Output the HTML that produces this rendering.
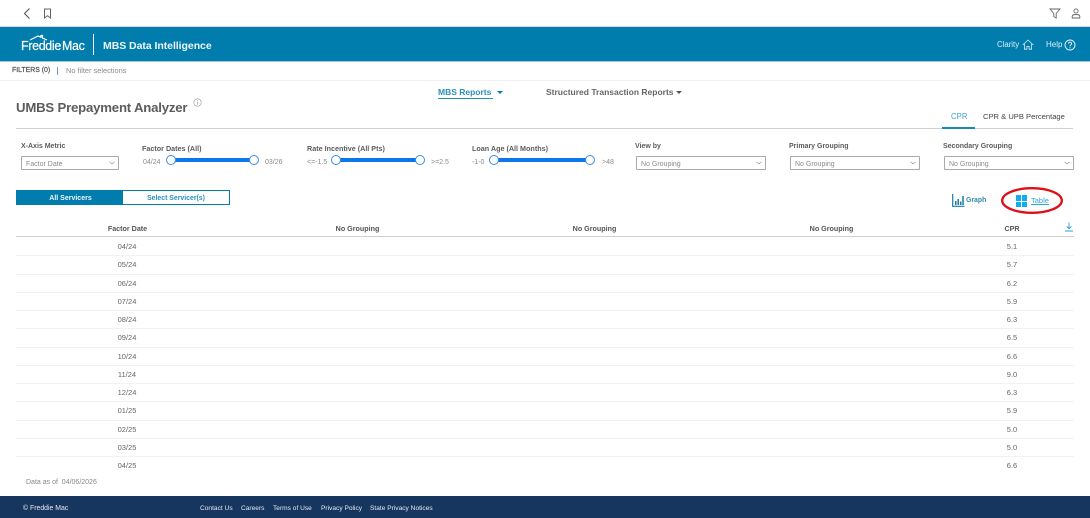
<!DOCTYPE html>
<html><head><meta charset="utf-8">
<style>
html,body{margin:0;padding:0;background:#fff;}
body{width:1090px;height:518px;overflow:hidden;position:relative;font-family:"Liberation Sans",sans-serif;color:#555;filter:blur(.3px);}
.t{position:absolute;white-space:nowrap;line-height:12px;}
.b{position:absolute;}
.lab{font-size:7px;font-weight:bold;color:#5c5c5c;}
.lab2{font-size:7.2px;font-weight:bold;color:#5c5c5c;}
.sm{font-size:7px;color:#8a8a8a;}
.sel{position:absolute;height:12px;border:1px solid #a9a9a9;border-radius:1px;top:156px;background:#fff;font-size:7px;color:#8a8a8a;}
.sel span{position:absolute;left:4px;top:2px;line-height:12px;}
.sel svg{position:absolute;right:3px;top:4px;}
.track{position:absolute;height:4px;top:158px;background:#0d76e8;}
.knob{position:absolute;width:8px;height:8px;top:154.500px;border:1px solid #3b8dea;border-radius:50%;background:#fff;}
.row{position:absolute;left:16px;width:1058px;height:1px;background:#f2f2f2;}
.cell{position:absolute;font-size:7.500px;line-height:10px;color:#666;transform:translateX(-50%);white-space:nowrap;}
.th{position:absolute;top:224px;font-size:7.150px;font-weight:bold;line-height:10px;color:#555;transform:translateX(-50%);white-space:nowrap;}
.f{position:absolute;top:504px;font-size:6.600px;line-height:10px;color:#e6ebf2;white-space:nowrap;}
</style></head>
<body>
<!-- top bar -->
<svg class="b" style="left:22px;top:7px" width="10" height="13" viewBox="0 0 10 13"><path d="M7.500 1.500L2.500 6.500L7.500 11.500" fill="none" stroke="#555" stroke-width="1.100"/></svg>
<svg class="b" style="left:43px;top:8px" width="9" height="11" viewBox="0 0 9 11"><path d="M1.500 1h6v9L4.500 7.700 1.500 10z" fill="none" stroke="#666" stroke-width="1"/></svg>
<svg class="b" style="left:1049px;top:8px" width="12" height="11" viewBox="0 0 12 11"><path d="M1 1h10L7.200 5.500V10L4.800 8.600V5.500z" fill="none" stroke="#666" stroke-width=".9"/></svg>
<svg class="b" style="left:1071px;top:8px" width="10" height="11" viewBox="0 0 10 11"><circle cx="5" cy="3" r="2.100" fill="none" stroke="#666" stroke-width=".9"/><path d="M1.200 10V8.200C1.200 7 2.400 6.500 5 6.500s3.800.5 3.800 1.700V10z" fill="none" stroke="#666" stroke-width=".9"/></svg>
<div class="b" style="left:0;top:26px;width:1090px;height:1px;background:#cfd8dc"></div>
<!-- header -->
<div class="b" style="left:0;top:27px;width:1090px;height:34px;background:#007cad"></div>
<div class="b" style="left:0;top:61px;width:1090px;height:1px;background:#9cc9dc"></div>
<svg class="b" style="left:29px;top:34px" width="20" height="7" viewBox="0 0 20 7"><path d="M1 6L9 2l3 1.200V1.500h1.500v2.500L18 6" fill="none" stroke="#fff" stroke-width="1.200"/></svg>
<div class="t" style="left:21px;top:39px;font-size:12.500px;line-height:14px;color:#fff;letter-spacing:-.35px;-webkit-text-stroke:.2px #fff;">Freddie<span style="margin-left:1px">Mac</span></div>
<div class="b" style="left:93px;top:34px;width:1px;height:21px;background:#fff"></div>
<div class="t" style="left:103px;top:39px;font-size:10.500px;line-height:14px;font-weight:bold;color:#eef6fa;letter-spacing:-.05px;">MBS Data Intelligence</div>
<div class="t" style="left:997px;top:39px;font-size:7.800px;color:#dceef5;">Clarity</div>
<svg class="b" style="left:1022px;top:39px" width="12" height="11" viewBox="0 0 12 11"><path d="M.7 6L6 1l5.300 5M2.400 5v5.200h2.500V7.400h2.200v2.800h2.500V5" fill="none" stroke="#dceef5" stroke-width=".8"/></svg>
<div class="t" style="left:1046px;top:39px;font-size:8px;color:#dceef5;">Help</div>
<svg class="b" style="left:1064px;top:39px" width="12" height="12" viewBox="0 0 12 12"><circle cx="6" cy="6" r="5" fill="none" stroke="#eef6fa" stroke-width=".9"/><path d="M4.400 4.600C4.500 3.600 5.200 3.200 6 3.200c.9 0 1.600.6 1.600 1.400C7.600 5.700 6 5.800 6 7.200" fill="none" stroke="#eef6fa" stroke-width=".9"/><circle cx="6" cy="8.800" r=".6" fill="#eef6fa"/></svg>
<!-- filter bar -->
<div class="t" style="left:12px;top:65px;font-size:6.900px;color:#444;-webkit-text-stroke:.15px #444;">FILTERS (0)</div>
<div class="b" style="left:57px;top:67px;width:1px;height:8px;background:#6f9ab0"></div>
<div class="t" style="left:66px;top:65px;font-size:7.400px;color:#8a8a8a;">No filter selections</div>
<div class="b" style="left:0;top:80px;width:1090px;height:1px;background:#f0f0f0"></div>
<!-- title -->
<div class="t" style="left:16px;top:100px;font-size:13.200px;line-height:16px;font-weight:bold;color:#5c5c5c;letter-spacing:-.2px;">UMBS Prepayment Analyzer</div>
<svg class="b" style="left:193px;top:98px" width="9" height="9" viewBox="0 0 9 9"><circle cx="4.500" cy="4.500" r="3.700" fill="none" stroke="#999" stroke-width=".6"/><path d="M4.500 2.300v.8M4.500 3.800v2.800" stroke="#999" stroke-width=".7"/></svg>
<!-- report tabs -->
<div class="t" style="left:438px;top:86px;font-size:8.500px;font-weight:bold;color:#2a8fbb;">MBS Reports</div>
<div class="b" style="left:438px;top:98px;width:55px;height:1px;background:#2a8fbb"></div>
<div class="b" style="left:497px;top:91px;width:0;height:0;border-left:3px solid transparent;border-right:3px solid transparent;border-top:3px solid #007cad"></div>
<div class="t" style="left:546px;top:86px;font-size:8.500px;font-weight:bold;color:#666;">Structured Transaction Reports</div>
<div class="b" style="left:676px;top:91px;width:0;height:0;border-left:3px solid transparent;border-right:3px solid transparent;border-top:3px solid #555"></div>
<!-- CPR tabs -->
<div class="b" style="left:16px;top:128px;width:1057px;height:1px;background:#cfcfcf"></div>
<div class="b" style="left:942px;top:127px;width:33px;height:2px;background:#1d88b4"></div>
<div class="t" style="left:951px;top:111px;font-size:7.800px;color:#3ea3cc;">CPR</div>
<div class="t" style="left:983px;top:111px;font-size:7.600px;color:#444;">CPR &amp; UPB Percentage</div>
<!-- controls -->
<div class="t lab" style="left:21px;top:141px;">X-Axis Metric</div>
<div class="sel" style="left:21px;width:96px;"><span>Factor Date</span><svg width="6" height="4" viewBox="0 0 6 4"><path d="M.5.8L3 3 5.500.8" fill="none" stroke="#888" stroke-width=".6"/></svg></div>
<div class="t lab2" style="left:142px;top:143px;">Factor Dates (All)</div>
<div class="t sm" style="left:143px;top:157px;">04/24</div>
<div class="track" style="left:172px;width:82px;"></div><div class="knob" style="left:166px"></div><div class="knob" style="left:249px"></div>
<div class="t sm" style="left:265px;top:157px;">03/26</div>

<div class="t lab2" style="left:307px;top:143px;">Rate Incentive (All Pts)</div>
<div class="t sm" style="left:307px;top:157px;">&lt;=-1.5</div>
<div class="track" style="left:336px;width:83px;"></div><div class="knob" style="left:331px"></div><div class="knob" style="left:415px"></div>
<div class="t sm" style="left:431px;top:157px;">&gt;=2.5</div>

<div class="t lab2" style="left:472px;top:143px;">Loan Age (All Months)</div>
<div class="t sm" style="left:472px;top:157px;">-1-0</div>
<div class="track" style="left:494px;width:96px;"></div><div class="knob" style="left:489px"></div><div class="knob" style="left:585px"></div>
<div class="t sm" style="left:602px;top:157px;">&gt;48</div>

<div class="t lab" style="left:635px;top:141px;">View by</div>
<div class="sel" style="left:636px;width:128px;"><span>No Grouping</span><svg width="6" height="4" viewBox="0 0 6 4"><path d="M.5.8L3 3 5.500.8" fill="none" stroke="#888" stroke-width=".6"/></svg></div>
<div class="t lab" style="left:789px;top:141px;">Primary Grouping</div>
<div class="sel" style="left:790px;width:128px;"><span>No Grouping</span><svg width="6" height="4" viewBox="0 0 6 4"><path d="M.5.8L3 3 5.500.8" fill="none" stroke="#888" stroke-width=".6"/></svg></div>
<div class="t lab" style="left:943px;top:141px;">Secondary Grouping</div>
<div class="sel" style="left:944px;width:128px;"><span>No Grouping</span><svg width="6" height="4" viewBox="0 0 6 4"><path d="M.5.8L3 3 5.500.8" fill="none" stroke="#888" stroke-width=".6"/></svg></div>
<!-- servicer toggle -->
<div class="b" style="left:16px;top:190px;width:214px;height:15px;border:1px solid #007cad;box-sizing:border-box;background:#fff"></div>
<div class="b" style="left:16px;top:190px;width:107px;height:15px;background:#007cad"></div>
<div class="t" style="left:70.500px;top:193px;font-size:7px;font-weight:bold;color:#f0f7fa;transform:translateX(-50%);">All Servicers</div>
<div class="t" style="left:176px;top:193px;font-size:6.900px;font-weight:bold;color:#2a8fbb;transform:translateX(-50%);">Select Servicer(s)</div>
<!-- graph / table -->
<svg class="b" style="left:952px;top:194px" width="13" height="13" viewBox="0 0 13 13"><path d="M.7 0v12.300H12.500" fill="none" stroke="#1a7ba6" stroke-width="1.200"/><path d="M3 11V7h1.500v4zM5.500 11V5h1.500v6zM8 11V7.500h1.500V11zM10.300 11V2h1.500v9z" fill="#1a7ba6"/></svg>
<div class="t" style="left:966px;top:195px;font-size:6.900px;font-weight:bold;color:#3388ad;">Graph</div>
<svg class="b" style="left:1000px;top:186px" width="64" height="29" viewBox="0 0 64 29"><ellipse cx="32" cy="14.500" rx="29.800" ry="12.300" fill="none" stroke="#df0f18" stroke-width="2.400"/></svg>
<div class="b" style="left:1016px;top:195px;width:5px;height:5.500px;background:#10aeee"></div>
<div class="b" style="left:1022px;top:195px;width:5px;height:5.500px;background:#10aeee"></div>
<div class="b" style="left:1016px;top:201.500px;width:5px;height:5.500px;background:#10aeee"></div>
<div class="b" style="left:1022px;top:201.500px;width:5px;height:5.500px;background:#10aeee"></div>
<div class="t" style="left:1031px;top:195px;font-size:7.500px;color:#2ea6da;text-decoration:underline;">Table</div>
<!-- table head -->
<div class="th" style="left:127.500px">Factor Date</div>
<div class="th" style="left:357.500px">No Grouping</div>
<div class="th" style="left:594.500px">No Grouping</div>
<div class="th" style="left:831.500px">No Grouping</div>
<div class="th" style="left:1012px">CPR</div>
<svg class="b" style="left:1064px;top:222px" width="10" height="10" viewBox="0 0 10 10"><path d="M5 .5v6M2.700 4.300L5 6.700l2.300-2.400M1 9h8" fill="none" stroke="#2e9bd0" stroke-width=".9"/></svg>
<div class="b" style="left:16px;top:236px;width:1058px;height:1px;background:#cfcfcf"></div>
<!-- rows -->
<div class="cell" style="left:127px;top:242px">04/24</div><div class="cell" style="left:1012px;top:242px">5.1</div><div class="row" style="top:255px"></div>
<div class="cell" style="left:127px;top:260px">05/24</div><div class="cell" style="left:1012px;top:260px">5.7</div><div class="row" style="top:274px"></div>
<div class="cell" style="left:127px;top:279px">06/24</div><div class="cell" style="left:1012px;top:279px">6.2</div><div class="row" style="top:292px"></div>
<div class="cell" style="left:127px;top:297px">07/24</div><div class="cell" style="left:1012px;top:297px">5.9</div><div class="row" style="top:310px"></div>
<div class="cell" style="left:127px;top:315px">08/24</div><div class="cell" style="left:1012px;top:315px">6.3</div><div class="row" style="top:328px"></div>
<div class="cell" style="left:127px;top:333px">09/24</div><div class="cell" style="left:1012px;top:333px">6.5</div><div class="row" style="top:347px"></div>
<div class="cell" style="left:127px;top:352px">10/24</div><div class="cell" style="left:1012px;top:352px">6.6</div><div class="row" style="top:365px"></div>
<div class="cell" style="left:127px;top:370px">11/24</div><div class="cell" style="left:1012px;top:370px">9.0</div><div class="row" style="top:383px"></div>
<div class="cell" style="left:127px;top:388px">12/24</div><div class="cell" style="left:1012px;top:388px">6.3</div><div class="row" style="top:401px"></div>
<div class="cell" style="left:127px;top:406px">01/25</div><div class="cell" style="left:1012px;top:406px">5.9</div><div class="row" style="top:420px"></div>
<div class="cell" style="left:127px;top:425px">02/25</div><div class="cell" style="left:1012px;top:425px">5.0</div><div class="row" style="top:438px"></div>
<div class="cell" style="left:127px;top:443px">03/25</div><div class="cell" style="left:1012px;top:443px">5.0</div><div class="row" style="top:456px"></div>
<div class="cell" style="left:127px;top:461px">04/25</div><div class="cell" style="left:1012px;top:461px">6.6</div>
<div class="t" style="left:26px;top:477px;font-size:7px;color:#888;">Data as of&nbsp; 04/06/2026</div>
<!-- footer -->
<div class="b" style="left:0;top:496px;width:1090px;height:22px;background:#17365f"></div>
<div class="f" style="left:23px;font-size:6.900px">© Freddie Mac</div>
<div class="f" style="left:200px">Contact Us</div>
<div class="f" style="left:241px">Careers</div>
<div class="f" style="left:273px">Terms of Use</div>
<div class="f" style="left:321px">Privacy Policy</div>
<div class="f" style="left:370px">State Privacy Notices</div>
</body></html>
